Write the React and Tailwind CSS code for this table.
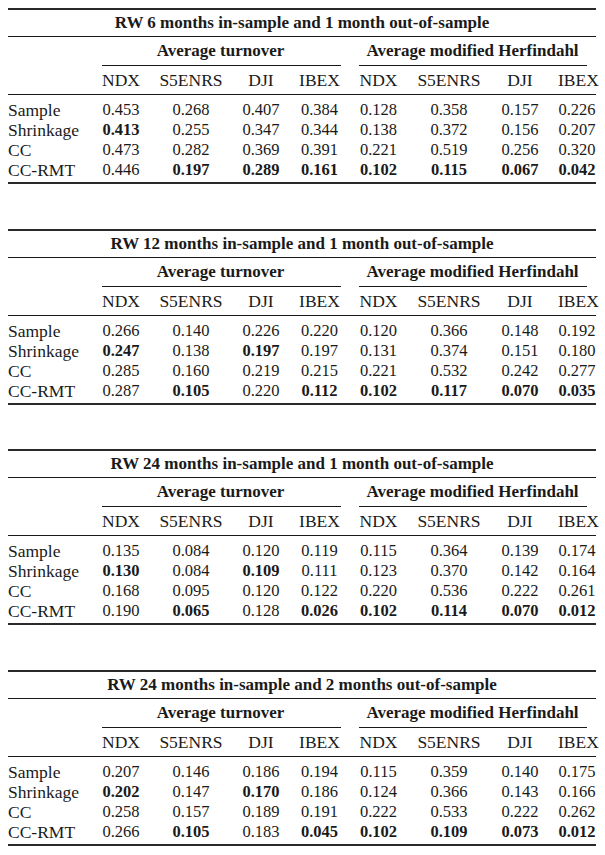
import React from "react";

const tables = [
  {
    title: "RW 6 months in-sample and 1 month out-of-sample",
    rows: [
      ["Sample", "0.453", "0.268", "0.407", "0.384", "0.128", "0.358", "0.157", "0.226"],
      ["Shrinkage", "*0.413", "0.255", "0.347", "0.344", "0.138", "0.372", "0.156", "0.207"],
      ["CC", "0.473", "0.282", "0.369", "0.391", "0.221", "0.519", "0.256", "0.320"],
      ["CC-RMT", "0.446", "*0.197", "*0.289", "*0.161", "*0.102", "*0.115", "*0.067", "*0.042"],
    ],
  },
  {
    title: "RW 12 months in-sample and 1 month out-of-sample",
    rows: [
      ["Sample", "0.266", "0.140", "0.226", "0.220", "0.120", "0.366", "0.148", "0.192"],
      ["Shrinkage", "*0.247", "0.138", "*0.197", "0.197", "0.131", "0.374", "0.151", "0.180"],
      ["CC", "0.285", "0.160", "0.219", "0.215", "0.221", "0.532", "0.242", "0.277"],
      ["CC-RMT", "0.287", "*0.105", "0.220", "*0.112", "*0.102", "*0.117", "*0.070", "*0.035"],
    ],
  },
  {
    title: "RW 24 months in-sample and 1 month out-of-sample",
    rows: [
      ["Sample", "0.135", "0.084", "0.120", "0.119", "0.115", "0.364", "0.139", "0.174"],
      ["Shrinkage", "*0.130", "0.084", "*0.109", "0.111", "0.123", "0.370", "0.142", "0.164"],
      ["CC", "0.168", "0.095", "0.120", "0.122", "0.220", "0.536", "0.222", "0.261"],
      ["CC-RMT", "0.190", "*0.065", "0.128", "*0.026", "*0.102", "*0.114", "*0.070", "*0.012"],
    ],
  },
  {
    title: "RW 24 months in-sample and 2 months out-of-sample",
    rows: [
      ["Sample", "0.207", "0.146", "0.186", "0.194", "0.115", "0.359", "0.140", "0.175"],
      ["Shrinkage", "*0.202", "0.147", "*0.170", "0.186", "0.124", "0.366", "0.143", "0.166"],
      ["CC", "0.258", "0.157", "0.189", "0.191", "0.222", "0.533", "0.222", "0.262"],
      ["CC-RMT", "0.266", "*0.105", "0.183", "*0.045", "*0.102", "*0.109", "*0.073", "*0.012"],
    ],
  },
];

const headers = ["NDX", "S5ENRS", "DJI", "IBEX", "NDX", "S5ENRS", "DJI", "IBEX"];
const gridCols = "grid grid-cols-[84px_58px_82px_58px_59px_59px_82px_60px_46px]";

function Cell({ value, idx }) {
  const bold = value.startsWith("*");
  const text = bold ? value.slice(1) : value;
  if (idx === 0) {
    return <div className="text-left whitespace-nowrap text-[17.5px]">{text}</div>;
  }
  return (
    <div className={(idx === 8 ? "pl-2 " : "") + "text-center" + (bold ? " font-bold" : "")}>
      {text}
    </div>
  );
}

function Table({ title, rows }) {
  return (
    <div className="w-[588px]">
      <div className="h-[2px] bg-[#2a2a2a]" />
      <div className="h-[26px] flex items-center justify-center font-bold text-[17px]">{title}</div>
      <div className="h-px bg-[#1a1a1a]" />
      <div className={gridCols}>
        <div />
        <div className="col-span-4 flex flex-col">
          <div className="h-[28px] flex items-center justify-center font-bold text-[17px]">
            Average turnover
          </div>
          <div className="h-px bg-[#1a1a1a] ml-[10px] mr-[8px]" />
        </div>
        <div className="col-span-4 flex flex-col">
          <div className="h-[28px] flex items-center justify-center font-bold text-[17px]">
            Average modified Herfindahl
          </div>
          <div className="h-px bg-[#1a1a1a] ml-[10px] mr-[9px]" />
        </div>
      </div>
      <div className={gridCols + " h-[28px] items-center text-[17.5px]"}>
        <div />
        {headers.map((h, i) => (
          <div key={i} className={(i === 7 ? "pl-2 " : "") + "text-center"}>
            {h}
          </div>
        ))}
      </div>
      <div className="h-px bg-[#1a1a1a]" />
      <div className="pt-[5px] pb-[2px]">
        {rows.map((r, ri) => (
          <div key={ri} className={gridCols + " h-[20px] items-center"}>
            {r.map((v, i) => (
              <Cell key={i} value={v} idx={i} />
            ))}
          </div>
        ))}
      </div>
      <div className="h-[2px] bg-[#2a2a2a]" />
    </div>
  );
}

export default function App() {
  return (
    <div className="w-[605px] h-[855px] bg-white text-[#1a1a1a] font-['Liberation_Serif',serif] text-[16.5px] leading-[20px] pt-[8px] pl-[8px] flex flex-col gap-[44.5px]">
      {tables.map((t, i) => (
        <Table key={i} title={t.title} rows={t.rows} />
      ))}
    </div>
  );
}
